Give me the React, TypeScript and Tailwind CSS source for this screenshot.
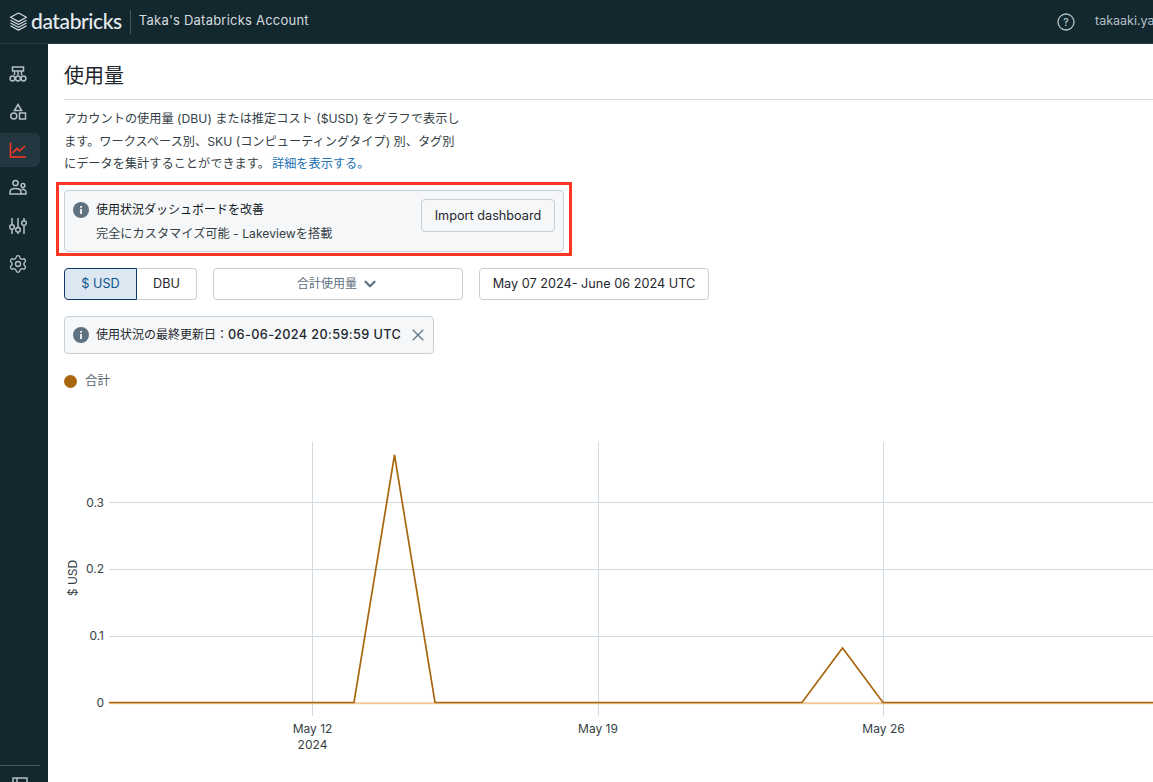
import { ChevronDown, Settings, X } from "lucide-react";

const font = { fontFamily: '"Inter", "Noto Sans CJK JP", sans-serif' };

function InfoIcon() {
  return (
    <svg width="16" height="16" viewBox="0 0 16 16" className="shrink-0">
      <circle cx="8" cy="8" r="8" fill="#5f7281" />
      <rect x="7.1" y="7" width="1.8" height="5" fill="#f5f7f9" />
      <rect x="7.1" y="4" width="1.8" height="1.8" fill="#f5f7f9" />
    </svg>
  );
}

function Logo() {
  return (
    <svg width="19" height="20" viewBox="0 0 19 20" fill="none" stroke="#d5dcdf" strokeWidth="1.2" strokeLinejoin="round">
      <path d="M9.5 1 L17.5 5.3 L9.5 9.6 L1.5 5.3 Z" />
      <path d="M1.5 8.2 L9.5 12.5 L17.5 8.2" />
      <path d="M1.5 11 L9.5 15.3 L17.5 11" />
      <path d="M1.5 13.8 L9.5 18.1 L17.5 13.8" />
    </svg>
  );
}

function NavItem({ active, children }: { active?: boolean; children: React.ReactNode }) {
  return (
    <div className={active ? "w-10 h-[34px] flex items-center justify-center rounded-r-md bg-[#22373f] pr-[4px]" : "w-10 h-[34px] flex items-center justify-center pr-[4px]"}>
      {children}
    </div>
  );
}

function Sidebar() {
  const s = { fill: "none", stroke: "#b5c0c6", strokeWidth: 1.5 };
  return (
    <aside className="w-12 shrink-0 bg-[#13272f] flex flex-col pt-[13px] gap-[4px] relative">
      <NavItem>
        <svg width="18" height="18" viewBox="0 0 18 18" {...s}>
          <rect x="3.5" y="2" width="11" height="4" />
          <path d="M5.5 6V10M12.5 6V10M9 6V10" />
          <circle cx="3.5" cy="13.5" r="2.4" />
          <circle cx="9" cy="13.5" r="2.4" />
          <circle cx="14.5" cy="13.5" r="2.4" />
        </svg>
      </NavItem>
      <NavItem>
        <svg width="18" height="18" viewBox="0 0 18 18" {...s}>
          <path d="M9 1.5 L12.6 7.5 H5.4 Z" />
          <circle cx="4.8" cy="13" r="3" />
          <rect x="10.5" y="10" width="6" height="6" />
        </svg>
      </NavItem>
      <NavItem active>
        <svg width="18" height="18" viewBox="0 0 18 18" fill="none" stroke="#ff3621" strokeWidth="1.6">
          <path d="M1.5 1.5V16H17" />
          <path d="M3.5 12 L8 7.5 L10.5 10 L16 5" />
        </svg>
      </NavItem>
      <NavItem>
        <svg width="18" height="18" viewBox="0 0 18 18" {...s}>
          <circle cx="6.5" cy="4" r="2.6" />
          <circle cx="14" cy="6.5" r="1.9" />
          <path d="M1 15V13C1 10.5 3.5 9.5 6.5 9.5C9.5 9.5 12 10.5 12 13V15Z" />
          <path d="M12.5 10.5C15 10 17 11 17 13V15H12" />
        </svg>
      </NavItem>
      <NavItem>
        <svg width="18" height="18" viewBox="0 0 18 18" {...s}>
          <path d="M3 1V7.5M3 12.5V17M9 1V10.5M9 15V17M15 1V3.5M15 8.5V17" />
          <circle cx="3" cy="10" r="2.3" />
          <circle cx="9" cy="12.7" r="2.3" />
          <circle cx="15" cy="6" r="2.3" />
        </svg>
      </NavItem>
      <NavItem>
        <Settings size={20} strokeWidth={1.6} color="#b5c0c6" />
      </NavItem>
      <div className="mt-auto w-10 border-t border-[#44565e] h-[17px] flex justify-center pt-[11px]">
        <svg width="16" height="16" viewBox="0 0 16 16" {...s}>
          <rect x="1" y="1" width="14" height="14" />
          <path d="M5 1V15" />
        </svg>
      </div>
    </aside>
  );
}

function Chart() {
  const tick = "#353f46";
  return (
    <svg width="1089" height="364" viewBox="0 0 1089 364" className="block" style={font}>
      <g stroke="#d1d9e1" strokeWidth="1">
        <path d="M248.5 54V328M534.5 54V328M819.5 54V328" />
        <path d="M45 114.5H1089M45 181.5H1089M45 248.5H1089" />
        <path d="M45 315.3H1089" stroke="#f3c99a" strokeWidth="2" />
      </g>
      <polyline
        points="45,314.5 290,314.5 330.5,67 371,314.5 738,314.5 778.5,260 819,314.5 1089,314.5"
        fill="none"
        stroke="#a8660f"
        strokeWidth="1.7"
      />
      <g fontSize="12" fill={tick} textAnchor="end">
        <text x="40" y="119">0.3</text>
        <text x="40" y="185">0.2</text>
        <text x="40" y="252">0.1</text>
        <text x="40" y="319">0</text>
      </g>
      <g fontSize="12" fill={tick} textAnchor="middle">
        <text x="248.5" y="345">May 12</text>
        <text x="248.5" y="361">2024</text>
        <text x="534" y="345">May 19</text>
        <text x="819.5" y="345">May 26</text>
      </g>
      <text x="0" y="0" fontSize="12" fill={tick} textAnchor="middle" transform="translate(13 190) rotate(-90)">$ USD</text>
    </svg>
  );
}

export default function App() {
  return (
    <div className="w-[1153px] h-[782px] overflow-hidden flex flex-col bg-white text-[#1f272d]" style={font}>
      <header className="h-11 shrink-0 bg-[#13272f] border-b border-[#2c3f47] flex items-center pl-[9px] text-[#d5dcdf]">
        <Logo />
        <span className="ml-[3px] -mt-[2px] text-[21px] font-medium tracking-[-0.4px] text-[#e8ecee] leading-none" style={{ fontFamily: '"Lato", sans-serif' }}>databricks</span>
        <div className="ml-2 w-px h-6 bg-[#44565e]" />
        <span className="ml-2 text-[13px] tracking-[0.22px] whitespace-nowrap -mt-[1px]">Taka's Databricks Account</span>
        <div className="ml-auto flex items-center gap-[20px] w-[96px] shrink-0 whitespace-nowrap text-[12.5px] text-[#b5c0c6]">
          <svg width="18" height="18" viewBox="0 0 18 18" fill="none" stroke="#b5c0c6" strokeWidth="1.3" className="shrink-0">
            <circle cx="9" cy="9" r="8" />
            <text x="9" y="12.5" fontSize="10" textAnchor="middle" fill="#b5c0c6" stroke="none" fontWeight="600">?</text>
          </svg>
          <span>takaaki.yayoi@databricks.com</span>
        </div>
      </header>
      <div className="flex flex-1 min-h-0">
        <Sidebar />
        <main className="flex-1 min-w-0 pl-4 overflow-hidden">
          <h1 className="text-[20px] leading-[28px] pt-[18px] pb-[9px] border-b border-[#d1d9e1] font-normal">使用量</h1>
          <p className="mt-[8px] w-[397px] text-[12.2px] leading-[22.5px] text-[#353f46]">
            アカウントの使用量 (DBU) または推定コスト ($USD) をグラフで表示します。ワークスペース別、SKU (コンピューティングタイプ) 別、タグ別にデータを集計することができます。<a className="text-[#2272b4] ml-[2px]">詳細を表示する。</a>
          </p>
          {/* highlighted banner */}
          <div className="mt-[6px] -ml-2 w-[516px] h-[74px] border-[3px] border-[#ff3621] pt-[5px] pl-[5px] pr-[5px] pb-[1px]">
            <div className="h-full rounded border border-[#c5d0d9] bg-[#f5f7f9] flex items-center justify-between pl-2 pr-[8px]">
              <div className="flex flex-col gap-[4px] pt-[2px] text-[12.2px] leading-[20px]">
                <div className="flex items-center gap-[7px] text-[12px] text-[#11171c]"><InfoIcon />使用状況ダッシュボードを改善</div>
                <div className="pl-[23px] text-[#353f46]">完全にカスタマイズ可能 - Lakeviewを搭載</div>
              </div>
              <button className="h-[33px] w-[134px] mb-[10px] rounded border border-[#c5d0d9] text-[12.7px] text-[#1f272d]">Import dashboard</button>
            </div>
          </div>
          <div className="mt-[12px] flex items-center h-8 text-[12.7px]">
            <button className="h-8 w-[73px] rounded-l border border-[#0e3a63] bg-[#dce7f2] text-[#0e538b]">$ USD</button>
            <button className="h-8 w-[60px] rounded-r border border-l-0 border-[#c5d0d9]">DBU</button>
            <button className="ml-4 h-8 w-[250px] rounded border border-[#c5d0d9] flex items-center justify-center gap-[4px] text-[12px] text-[#5f7281]">
              合計使用量 <ChevronDown size={18} strokeWidth={3} />
            </button>
            <button className="ml-4 h-8 w-[230px] rounded border border-[#c5d0d9]">May 07 2024- June 06 2024 UTC</button>
          </div>
          <div className="mt-[16px] w-[370px] h-[38px] rounded border border-[#c5d0d9] bg-[#f5f7f9] flex items-center pl-2 gap-[7px] text-[12px] whitespace-nowrap">
            <InfoIcon />
            <span>使用状況の最終更新日：<span className="text-[12.7px] font-medium tracking-[0.38px]">06-06-2024 20:59:59 UTC</span></span>
            <X size={20} strokeWidth={1.4} className="text-[#5f7281] shrink-0" />
          </div>
          <div className="mt-[18px] flex items-center gap-2 text-[12.5px] text-[#55656f] h-5">
            <span className="w-[13px] h-[13px] rounded-full bg-[#a8660f]" />
            合計
          </div>
          <div className="mt-[-4px]">
            <Chart />
          </div>
        </main>
      </div>
    </div>
  );
}
